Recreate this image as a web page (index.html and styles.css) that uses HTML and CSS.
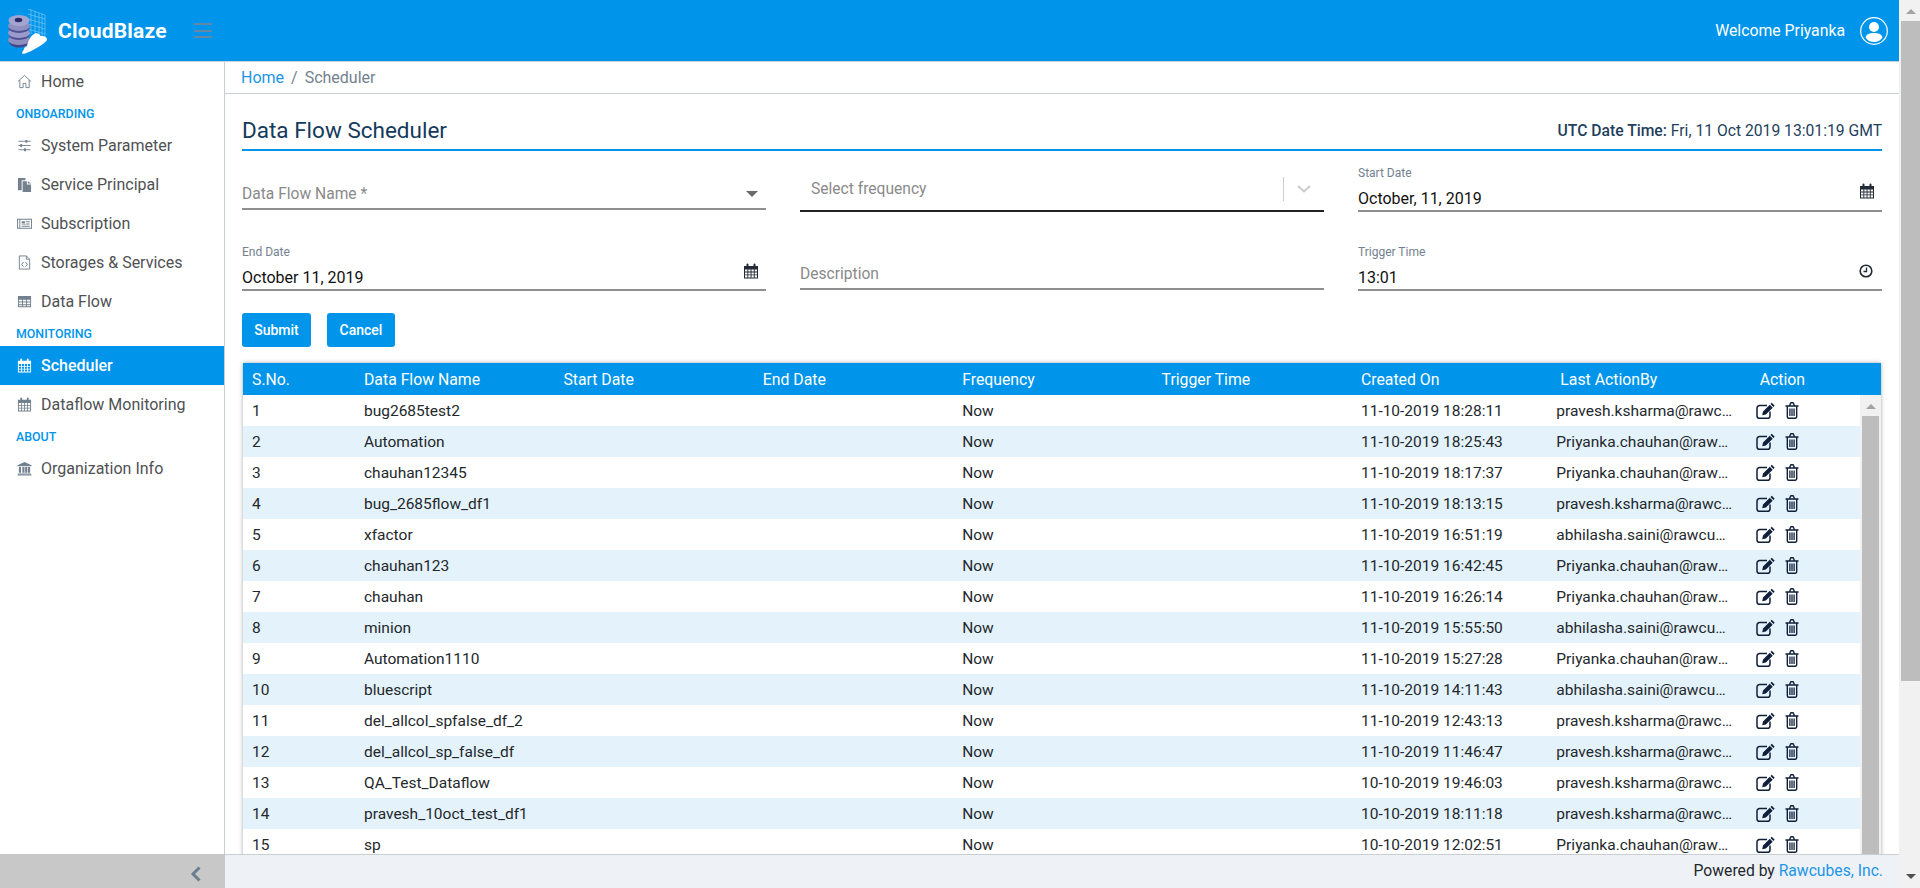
FILE: index.html
```html
<!DOCTYPE html>
<html lang="en">
<head>
    <meta charset="UTF-8">
    <title>CloudBlaze - Data Flow Scheduler</title>
    <link rel="stylesheet" href="styles.css">
</head>
<body>
    <svg class="icon-defs" width="0" height="0">
        <symbol id="i-cal" viewBox="0 0 16 16">
            <path fill="currentColor" d="M1 3h2.5V1.600a1 1 0 0 1 2 0V3h5V1.600a1 1 0 0 1 2 0V3H15v12.500H1zM2 6.500v2h2.400v-2zm3.300 0v2h2.300v-2zm3.200 0v2h2.300v-2zm3.200 0v2H14v-2zM2 9.400v2h2.400v-2zm3.300 0v2h2.300v-2zm3.200 0v2h2.300v-2zm3.200 0v2H14v-2zM2 12.300v2.200h2.400v-2.200zm3.300 0v2.200h2.300v-2.200zm3.200 0v2.200h2.300v-2.200zm3.200 0v2.200H14v-2.200z" fill-rule="evenodd"/>
        </symbol>
        <symbol id="i-edit" viewBox="0 0 20 18">
            <path fill="none" stroke="currentColor" stroke-width="1.500" d="M14 9.500v4.200A2.600 2.600 0 0 1 11.400 16.300H3.600A2.600 2.600 0 0 1 1 13.700V6.200A2.600 2.600 0 0 1 3.600 3.600H11"/>
            <path fill="currentColor" d="M15.800 .8l2.900 2.900-1.300 1.300-2.900-2.900zM13.800 2.800l2.900 2.900-6.800 6.800-3.700.8.800-3.700z"/>
        </symbol>
        <symbol id="i-trash" viewBox="0 0 14 17">
            <path fill="none" stroke="currentColor" stroke-width="1.400" d="M.5 4h13M2.300 4v10.800a1.500 1.500 0 0 0 1.500 1.500h6.400a1.500 1.500 0 0 0 1.500-1.500V4M4.500 4l.9-2.500a1 1 0 0 1 .9-.7h1.400a1 1 0 0 1 .9.700L9.500 4"/>
            <path fill="none" stroke="currentColor" stroke-width="1.300" d="M4.900 6.500v7.500M7 6.500v7.500M9.100 6.500v7.500"/>
        </symbol>
    </svg>

    <div class="page">
        <div class="app">
            <header class="topbar">
                <div class="brand">
                    <svg class="logo" viewBox="0 0 50 60" width="50" height="60">
                        <g fill="none" stroke="#8fd0f3" stroke-width=".7" opacity=".8">
                            <path d="M28 8l17 6v24M31 9v24M35 10v24M39 12v24M42 13v24M28 13l17 5M28 18l17 5M28 23l17 5M28 28l17 5"/>
                        </g>
                        <ellipse cx="19" cy="41" rx="10" ry="5.500" fill="#45478a"/>
                        <ellipse cx="19" cy="39" rx="11" ry="5" fill="#8f90c0"/>
                        <ellipse cx="19" cy="34" rx="10.500" ry="5" fill="#4f5194"/>
                        <ellipse cx="19" cy="32" rx="11" ry="5" fill="#9a9bca"/>
                        <ellipse cx="19" cy="27" rx="10.500" ry="5" fill="#4f5194"/>
                        <ellipse cx="19" cy="25" rx="11" ry="5" fill="#8f90c0"/>
                        <ellipse cx="19" cy="19.500" rx="10.500" ry="5.500" fill="#a3a4d0"/>
                        <ellipse cx="18.500" cy="19" rx="3.800" ry="2.200" fill="#2a2d6b"/>
                        <path d="M23 53c-1.500-.5-1-3 .5-3.500.5-3 2-4 3.500-4.500 1-5 4-11 8-12.500 2.500-1 5 .5 5.500 2.500 3-.5 7 1 6.500 4-2 3-8 7-14 10-4 2-7 3.500-10 4z" fill="#fff"/>
                    </svg>
                    <span class="brand-name">CloudBlaze</span>
                    <span class="burger"><i></i><i></i><i></i></span>
                </div>
                <div class="user">
                    <span>Welcome Priyanka</span>
                    <svg viewBox="0 0 28 28" width="28" height="28">
                        <circle cx="14" cy="14" r="13.300" fill="none" stroke="#fff" stroke-width="1.200"/>
                        <circle cx="14" cy="10" r="5" fill="#fff"/>
                        <path fill="#fff" d="M5.500 20.500c1-3.500 4-4.500 8.500-4.500s7.500 1 8.500 4.500C20.500 23.500 17.500 25 14 25s-6.500-1.500-8.500-4.500z"/>
                    </svg>
                </div>
            </header>

            <div class="middle">
                <nav class="sidebar">
                    <a class="nav-item">
                        <svg class="nav-icon" viewBox="0 0 16 16"><path fill="none" stroke="currentColor" stroke-width="1" d="M1 8l7-6.500L15 8M3 6.500v8h3.500V10h3v4.500H13v-8"/></svg>
                        Home
                    </a>
                    <div class="nav-group">ONBOARDING</div>
                    <a class="nav-item">
                        <svg class="nav-icon" viewBox="0 0 16 16"><path fill="none" stroke="currentColor" stroke-width="1" d="M1.500 3.500h13M1.500 8h13M1.500 12.500h13"/><path fill="currentColor" d="M9 2h2v3H9zM3.500 6.500h2v3h-2zM7.500 11h2v3h-2z"/></svg>
                        System Parameter
                    </a>
                    <a class="nav-item">
                        <svg class="nav-icon" viewBox="0 0 16 16"><path fill="currentColor" d="M1 1h8v2.500H5V14H1zM6 4.500h4.500V8H15v8H6zM11.500 4.500L15 7h-3.500z"/></svg>
                        Service Principal
                    </a>
                    <a class="nav-item">
                        <svg class="nav-icon" viewBox="0 0 16 16"><path fill="currentColor" fill-rule="evenodd" d="M0 3h16v10.500H0zM1 4v8.500h1.500V4zm2.500 0v8.500H15V4zM5 5.500h3.500V8H5zM9.500 5.500h4v.8h-4zM9.500 7.200h4V8h-4zM5 9h8.500v.8H5zM5 10.700h8.500v.8H5z"/></svg>
                        Subscription
                    </a>
                    <a class="nav-item">
                        <svg class="nav-icon" viewBox="0 0 16 16"><path fill="none" stroke="currentColor" stroke-width="1" d="M2.500 1h7.500l3.500 3.500V15h-11zM10 1v3.500h3.500M7 7.500L5 10l2 2.500M9 7.500l2 2.500-2 2.500"/></svg>
                        Storages &amp; Services
                    </a>
                    <a class="nav-item">
                        <svg class="nav-icon" viewBox="0 0 16 16"><path fill="currentColor" fill-rule="evenodd" d="M1 2h14v12H1zM2 6v2h3.300V6zm4.300 0v2h3.400V6zm4.400 0v2H14V6zM2 9v2h3.300V9zm4.300 0v2h3.400V9zm4.400 0v2H14V9zM2 12v1h3.300v-1zm4.300 0v1h3.400v-1zm4.400 0v1H14v-1z"/></svg>
                        Data Flow
                    </a>
                    <div class="nav-group">MONITORING</div>
                    <a class="nav-item nav-active">
                        <svg class="nav-icon"><use href="#i-cal"/></svg>
                        Scheduler
                    </a>
                    <a class="nav-item">
                        <svg class="nav-icon"><use href="#i-cal"/></svg>
                        Dataflow Monitoring
                    </a>
                    <div class="nav-group">ABOUT</div>
                    <a class="nav-item">
                        <svg class="nav-icon" viewBox="0 0 16 16"><path fill="currentColor" d="M8 1l7.500 3.500v1H.5v-1zM2 6.500h2.300v6H2zM5.700 6.500H8v6H5.700zM8.700 6.500H11v6H8.700zM11.700 6.500H14v6h-2.300zM1 13.200h14v1H1zM.5 14.500h15v1H.5z"/></svg>
                        Organization Info
                    </a>
                </nav>

                <main class="content">
                    <div class="breadcrumb"><a>Home</a><span class="sep">/</span><span>Scheduler</span></div>
                    <div class="panel">
                        <div class="title-row">
                            <h1>Data Flow Scheduler</h1>
                            <div class="utc"><b>UTC Date Time:</b> Fri, 11 Oct 2019 13:01:19 GMT</div>
                        </div>

                        <div class="form-grid">
                            <div class="field field-select">
                                <span class="placeholder">Data Flow Name *</span>
                                <span class="caret"></span>
                            </div>
                            <div class="field field-freq">
                                <span class="placeholder">Select frequency</span>
                                <span class="freq-tools">
                                    <svg viewBox="0 0 14 8" width="14" height="8"><path fill="none" stroke="#ccc" stroke-width="2" d="M1 1l6 5.500L13 1"/></svg>
                                </span>
                            </div>
                            <div class="field field-labelled">
                                <label>Start Date</label>
                                <div class="value">October, 11, 2019</div>
                                <svg class="field-icon"><use href="#i-cal"/></svg>
                            </div>
                            <div class="field field-labelled">
                                <label>End Date</label>
                                <div class="value">October 11, 2019</div>
                                <svg class="field-icon field-icon-end"><use href="#i-cal"/></svg>
                            </div>
                            <div class="field field-desc">
                                <span class="placeholder">Description</span>
                            </div>
                            <div class="field field-labelled">
                                <label>Trigger Time</label>
                                <div class="value">13:01</div>
                                <svg class="field-icon field-icon-clock" viewBox="0 0 14 14"><circle cx="7" cy="7" r="5.800" fill="none" stroke="currentColor" stroke-width="1.600"/><path fill="none" stroke="currentColor" stroke-width="1.300" d="M7.500 3.500v4H4.500"/></svg>
                            </div>
                        </div>

                        <div class="actions">
                            <button class="btn">Submit</button>
                            <button class="btn btn-cancel">Cancel</button>
                        </div>

                        <div class="grid">
                            <div class="grid-head">
                                <div class="c-sno">S.No.</div>
                                <div class="c">Data Flow Name</div>
                                <div class="c">Start Date</div>
                                <div class="c">End Date</div>
                                <div class="c">Frequency</div>
                                <div class="c">Trigger Time</div>
                                <div class="c">Created On</div>
                                <div class="c">Last ActionBy</div>
                                <div class="c">Action</div>
                            </div>
                            <div class="grid-body">
                                <div class="rows" id="rows"></div>
                                <div class="vscroll">
                                    <span class="arrow-up"></span>
                                    <div class="vthumb"></div>
                                </div>
                            </div>
                        </div>
                    </div>
                </main>
            </div>

            <div class="bottom">
                <div class="collapse">
                    <svg viewBox="0 0 12 16" width="12" height="16"><path fill="none" stroke="#6c7d90" stroke-width="3" d="M9.500 1.500L3 8l6.500 6.500"/></svg>
                </div>
                <footer class="footer">Powered by&nbsp;<a>Rawcubes, Inc.</a></footer>
            </div>
        </div>

        <div class="page-scroll">
            <span class="arrow-up"></span>
            <div class="page-thumb"></div>
            <span class="arrow-down"></span>
        </div>
    </div>

    <script>
        const rowsData = [
            ['1', 'bug2685test2', '11-10-2019 18:28:11', 'pravesh.ksharma@rawcubes.com'],
            ['2', 'Automation', '11-10-2019 18:25:43', 'Priyanka.chauhan@rawcubes.com'],
            ['3', 'chauhan12345', '11-10-2019 18:17:37', 'Priyanka.chauhan@rawcubes.com'],
            ['4', 'bug_2685flow_df1', '11-10-2019 18:13:15', 'pravesh.ksharma@rawcubes.com'],
            ['5', 'xfactor', '11-10-2019 16:51:19', 'abhilasha.saini@rawcubes.com'],
            ['6', 'chauhan123', '11-10-2019 16:42:45', 'Priyanka.chauhan@rawcubes.com'],
            ['7', 'chauhan', '11-10-2019 16:26:14', 'Priyanka.chauhan@rawcubes.com'],
            ['8', 'minion', '11-10-2019 15:55:50', 'abhilasha.saini@rawcubes.com'],
            ['9', 'Automation1110', '11-10-2019 15:27:28', 'Priyanka.chauhan@rawcubes.com'],
            ['10', 'bluescript', '11-10-2019 14:11:43', 'abhilasha.saini@rawcubes.com'],
            ['11', 'del_allcol_spfalse_df_2', '11-10-2019 12:43:13', 'pravesh.ksharma@rawcubes.com'],
            ['12', 'del_allcol_sp_false_df', '11-10-2019 11:46:47', 'pravesh.ksharma@rawcubes.com'],
            ['13', 'QA_Test_Dataflow', '10-10-2019 19:46:03', 'pravesh.ksharma@rawcubes.com'],
            ['14', 'pravesh_10oct_test_df1', '10-10-2019 18:11:18', 'pravesh.ksharma@rawcubes.com'],
            ['15', 'sp', '10-10-2019 12:02:51', 'Priyanka.chauhan@rawcubes.com']
        ];

        // Pintar las filas de la tabla
        document.getElementById('rows').innerHTML = rowsData.map(r => `
            <div class="row">
                <div class="c-sno">${r[0]}</div>
                <div class="c">${r[1]}</div>
                <div class="c"></div>
                <div class="c"></div>
                <div class="c">Now</div>
                <div class="c"></div>
                <div class="c">${r[2]}</div>
                <div class="c c-mail"><span>${r[3]}</span></div>
                <div class="c c-actions">
                    <svg class="act-edit"><use href="#i-edit"/></svg>
                    <svg class="act-trash"><use href="#i-trash"/></svg>
                </div>
            </div>
        `).join('');
    </script>
</body>
</html>
```

FILE: styles.css
```css
* {
    box-sizing: border-box;
}
html, body {
    margin: 0;
    height: 100%;
    overflow: hidden;
}
body {
    font-family: Roboto, "Liberation Sans", sans-serif;
    font-size: 15px;
    color: #23282c;
    background: #fff;
}
.icon-defs {
    position: absolute;
}
.page {
    display: flex;
    height: 888px;
}
.app {
    width: 1899px;
    display: flex;
    flex-direction: column;
}

/* barra superior */
.topbar {
    height: 62px;
    flex: none;
    display: flex;
    justify-content: space-between;
    align-items: center;
    background: #0095eb;
    border-bottom: 1px solid #c8ced3;
    color: #fff;
}
.brand {
    display: flex;
    align-items: center;
}
.logo {
    margin-left: 0;
    flex: none;
}
.brand-name {
    margin-left: 8px;
    font-size: 21px;
    font-weight: 700;
    letter-spacing: .2px;
}
.burger {
    margin-left: 27px;
    width: 18px;
    display: flex;
    flex-direction: column;
    gap: 4.500px;
}
.burger i {
    height: 2px;
    background: #6488a4;
}
.user {
    display: flex;
    align-items: center;
    gap: 15px;
    margin-right: 11px;
    font-size: 15.800px;
}

.middle {
    flex: 1;
    min-height: 0;
    display: flex;
}

/* menu lateral */
.sidebar {
    width: 225px;
    flex: none;
    border-right: 1px solid #c8ced3;
    background: #fff;
    color: #4f5154;
    font-size: 16px;
}
.nav-item {
    display: flex;
    align-items: center;
    height: 39px;
    padding-left: 17px;
}
.nav-icon {
    width: 15px;
    height: 15px;
    margin-right: 9px;
    flex: none;
    color: #73818f;
}
.nav-active {
    background: #0095eb;
    color: #fff;
    font-weight: 500;
}
.nav-active .nav-icon {
    color: #fff;
}
.nav-group {
    height: 25px;
    line-height: 26px;
    padding-left: 16px;
    font-size: 12.400px;
    font-weight: 500;
    color: #0095eb;
}

/* contenido */
.content {
    flex: 1;
    min-width: 0;
    display: flex;
    flex-direction: column;
}
.breadcrumb {
    height: 32px;
    flex: none;
    display: flex;
    align-items: center;
    padding: 0 16px;
    font-size: 16px;
    color: #73818f;
    border-bottom: 1px solid #c8ced3;
}
.breadcrumb a {
    color: #2196e8;
}
.sep {
    margin: 0 7px;
}
.panel {
    flex: 1;
    min-height: 0;
    padding: 0 17px;
    overflow: hidden;
}
.title-row {
    height: 57px;
    padding-top: 16px;
    display: flex;
    justify-content: space-between;
    align-items: center;
    border-bottom: 2px solid #0095eb;
}
h1 {
    margin: 0;
    font-size: 22.500px;
    font-weight: 400;
    color: #143a5c;
}
.utc {
    margin-top: 2px;
    font-size: 15.700px;
    color: #1f3f5c;
}
.utc b {
    font-weight: 500;
}

/* formulario */
.form-grid {
    display: grid;
    grid-template-columns: repeat(3, 524px);
    column-gap: 34px;
    grid-template-rows: 61px 79px;
}
.field {
    position: relative;
    border-bottom: 2px solid #8e8e8e;
    align-self: end;
    font-size: 16px;
}
.placeholder {
    display: block;
    line-height: 22px;
    font-size: 15.600px;
    color: #8a8a8a;
}
.field-select {
    height: 36px;
    margin-bottom: 2px;
    padding-top: 9px;
}
.caret {
    position: absolute;
    right: 8px;
    top: 17px;
    border-left: 6px solid transparent;
    border-right: 6px solid transparent;
    border-top: 6px solid #6a6a6a;
}
.field-freq {
    height: 46px;
    padding: 12px 0 0 11px;
    border-bottom: 2px solid #222;
}
.freq-tools {
    position: absolute;
    right: 0;
    top: 11px;
    width: 41px;
    height: 24px;
    display: flex;
    align-items: center;
    justify-content: center;
    border-left: 1px solid #ccc;
}
.field-desc {
    height: 36px;
    margin-bottom: 1px;
    padding-top: 9px;
}
.field-labelled {
    height: 46px;
}
.field-labelled label {
    display: block;
    font-size: 12px;
    line-height: 14px;
    color: #73818f;
}
.value {
    margin-top: 8px;
    font-size: 16px;
    line-height: 22px;
    color: #111;
}
.field-icon {
    position: absolute;
    right: 7px;
    top: 17px;
    width: 16px;
    height: 16px;
    color: #222a35;
}
.field-icon-end {
    top: 18px;
}
.field-icon-clock {
    right: 9px;
    top: 19px;
    width: 14px;
    height: 14px;
}

.actions {
    display: flex;
    gap: 16px;
    margin-top: 22px;
}
.btn {
    height: 34px;
    width: 69px;
    padding: 0;
    border: none;
    border-radius: 3px;
    background: #0095eb;
    color: #fff;
    font-family: inherit;
    font-size: 14px;
    font-weight: 500;
}
.btn-cancel {
    width: 68px;
}

/* tabla */
.grid {
    margin: 16px 1px 0;
    box-shadow: 0 0 4px rgba(0,0,0,0.35);
    background: #fff;
}
.grid-head, .row {
    display: flex;
    align-items: center;
}
.grid-head {
    height: 32px;
    background: #0095eb;
    color: #fff;
    font-size: 15.800px;
}
.c {
    width: 199.400px;
    flex: none;
}
.c-sno {
    width: 121px;
    flex: none;
    padding-left: 9px;
}
.grid-body {
    display: flex;
}
.rows {
    flex: 1;
    min-width: 0;
    overflow: hidden;
}
.row {
    height: 31px;
    font-size: 15.500px;
}
.row:nth-child(even) {
    background: #e4f2fb;
}
.row .c {
    white-space: nowrap;
}
.row .c-mail {
    margin-left: -4px;
}
.c-mail span {
    display: block;
    width: 177px;
    overflow: hidden;
    text-overflow: ellipsis;
}
.row .c-actions {
    display: flex;
    align-items: center;
    gap: 9px;
    color: #10203a;
}
.act-edit {
    width: 20px;
    height: 18px;
}
.act-trash {
    width: 14px;
    height: 17px;
}
.vscroll {
    width: 21px;
    flex: none;
    background: #f1f1f1;
    padding: 0 2px;
    display: flex;
    flex-direction: column;
    align-items: center;
}
.vscroll .arrow-up {
    margin-top: 9px;
}
.vthumb {
    width: 100%;
    margin-top: 7px;
    height: 600px;
    background: #bdbdbd;
}
.arrow-up {
    display: block;
    width: 0;
    border-left: 5px solid transparent;
    border-right: 5px solid transparent;
    border-bottom: 5px solid #a3a3a3;
}
.arrow-down {
    display: block;
    width: 0;
    border-left: 5px solid transparent;
    border-right: 5px solid transparent;
    border-top: 5px solid #505050;
}

/* pie */
.bottom {
    height: 34px;
    flex: none;
    display: flex;
}
.collapse {
    width: 225px;
    flex: none;
    display: flex;
    align-items: center;
    justify-content: flex-end;
    padding: 6px 23px 0 0;
    background: #c8c8c8;
}
.footer {
    flex: 1;
    display: flex;
    align-items: center;
    justify-content: flex-end;
    padding: 0 16px 2px 0;
    background: #eef1f5;
    border-top: 1px solid #c8ced3;
    font-size: 15.700px;
    color: #23282c;
}
.footer a {
    color: #2196e8;
}

/* scroll de la pagina */
.page-scroll {
    width: 21px;
    flex: none;
    background: #f1f1f1;
    display: flex;
    flex-direction: column;
    align-items: center;
    padding-left: 2px;
}
.page-scroll .arrow-up {
    margin-top: 9px;
}
.page-thumb {
    width: 100%;
    height: 660px;
    margin-top: 7px;
    background: #bdbdbd;
}
.page-scroll .arrow-down {
    margin-top: auto;
    margin-bottom: 9px;
}
```
